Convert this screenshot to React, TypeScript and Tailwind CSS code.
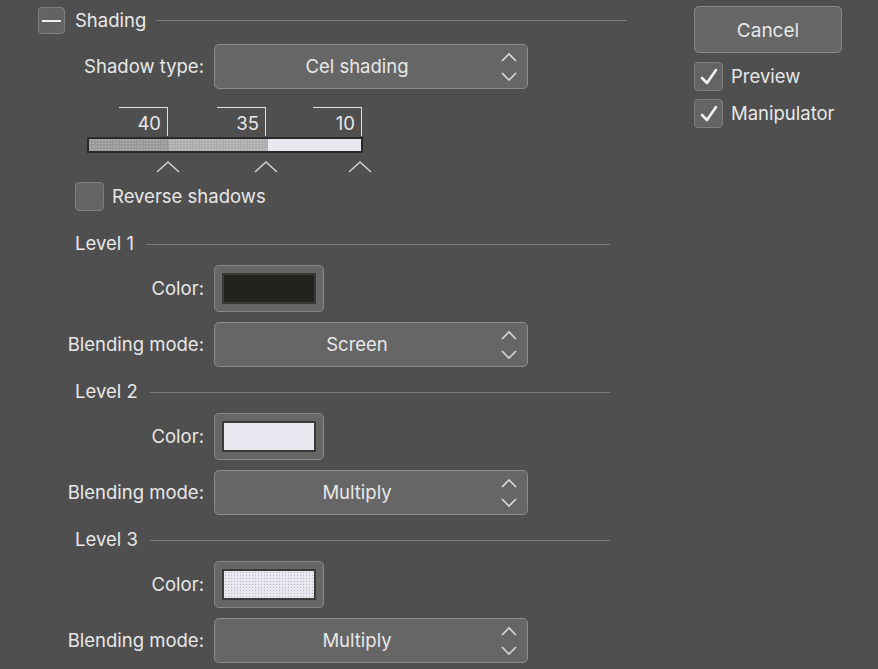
import React from 'react';

const font = { fontFamily: 'Inter, "Noto Sans", "Liberation Sans", sans-serif' };

const Chevrons = () => (
  <svg width="20" height="34" viewBox="0 0 20 34" className="absolute right-[8px] top-1/2 -translate-y-1/2">
    <polyline points="3,11 10,4 17,11" fill="none" stroke="#d8d8d8" strokeWidth="1.6" />
    <polyline points="3,23 10,30 17,23" fill="none" stroke="#d8d8d8" strokeWidth="1.6" />
  </svg>
);

const Select = ({ value }: { value: string }) => (
  <div className="relative w-[314px] h-[45px] rounded-[5px] border border-[#8c8c8c] bg-[#666666] flex items-center justify-center text-[18.5px] text-[#e8e8e8]">
    <span className="-ml-[28px]">{value}</span>
    <Chevrons />
  </div>
);

const Check = ({ checked }: { checked?: boolean }) => (
  <div className="w-[29px] h-[29px] rounded-[4px] border border-[#7e7e7e] bg-[#646464] flex items-center justify-center">
    {checked && (
      <svg width="22" height="22" viewBox="0 0 22 22">
        <polyline points="4,12 9,17 18,4" fill="none" stroke="#f2f2f2" strokeWidth="2.6" strokeLinecap="round" strokeLinejoin="round" />
      </svg>
    )}
  </div>
);

const Row = ({ label, children, className = '' }: { label: string; children: React.ReactNode; className?: string }) => (
  <div className={`flex items-center ${className}`}>
    <div className="w-[176px] pr-[10px] text-right text-[18.5px] text-[#e8e8e8] whitespace-nowrap">{label}</div>
    {children}
  </div>
);

const Swatch = ({ color, dotted }: { color: string; dotted?: boolean }) => (
  <div className="w-[110px] h-[47px] rounded-[5px] border border-[#8a8a8a] bg-[#666666] flex items-center justify-center">
    <div
      className="w-[94px] h-[31px] border-2 border-[#3a3a3a]"
      style={{
        background: color,
        backgroundImage: dotted ? 'radial-gradient(#b8b6bd 0.6px, transparent 0.8px)' : undefined,
        backgroundSize: dotted ? '3px 3px' : undefined,
      }}
    />
  </div>
);

const Divider = ({ label }: { label: string }) => (
  <div className="flex items-center ml-[37px] w-[535px] h-[22px]">
    <span className="text-[18.5px] text-[#e8e8e8]">{label}</span>
    <div className="flex-1 ml-[12px] h-px bg-[#7a7a7a]" />
  </div>
);

const Level = ({ label, color, dotted, mode, first }: { label: string; color: string; dotted?: boolean; mode: string; first?: boolean }) => (
  <div className={first ? 'mt-[22px]' : 'mt-[14px]'}>
    <Divider label={label} />
    <Row label="Color:" className="mt-[10px]">
      <Swatch color={color} dotted={dotted} />
    </Row>
    <Row label="Blending mode:" className="mt-[10px]">
      <Select value={mode} />
    </Row>
  </div>
);

const Caret = ({ x }: { x: number }) => (
  <svg width="26" height="14" viewBox="0 0 26 14" className="absolute top-[53px]" style={{ left: x - 13 }}>
    <polyline points="2,12 13,2 24,12" fill="none" stroke="#d0d0d0" strokeWidth="1.6" />
  </svg>
);

const Marker = ({ x, value }: { x: number; value: string }) => (
  <div className="absolute top-0 h-[29px] w-[49px] border-t border-r border-[#e0e0e0]" style={{ left: x - 49 }}>
    <span className="absolute right-[6px] top-[4px] text-[18.5px] leading-[22px] text-[#e8e8e8]">{value}</span>
  </div>
);

const Slider = () => (
  <div className="relative ml-[49px] mt-[18px] w-[290px] h-[64px]">
    <Marker x={81} value="40" />
    <Marker x={179} value="35" />
    <Marker x={275} value="10" />
    <div className="absolute left-0 top-[30px] w-[276px] h-[16px] border-2 border-[#2a2a2a] flex">
      <div
        className="w-[80px] h-full bg-[#9a9a9a]"
        style={{ backgroundImage: 'radial-gradient(#bdbdbd 0.6px, transparent 0.8px)', backgroundSize: '3px 3px' }}
      />
      <div
        className="w-[99px] h-full bg-[#adadad]"
        style={{ backgroundImage: 'radial-gradient(#cfcfcf 0.6px, transparent 0.8px)', backgroundSize: '3px 3px' }}
      />
      <div className="flex-1 h-full bg-[#e9e7ef]" />
    </div>
    <Caret x={81} />
    <Caret x={179} />
    <Caret x={273} />
  </div>
);

export default function App() {
  return (
    <div className="w-[878px] h-[669px] bg-[#4f4f4f] overflow-hidden flex" style={font}>
      <div className="w-[656px] pl-[38px] pt-[7px]">
        <div className="flex items-center h-[27px] w-[589px]">
          <div className="w-[27px] h-[27px] rounded-[4px] border border-[#7e7e7e] bg-[#636363] flex items-center justify-center">
            <div className="w-[19px] h-[2px] bg-[#eeeeee]" />
          </div>
          <span className="ml-[10px] text-[18.5px] text-[#e8e8e8]">Shading</span>
          <div className="flex-1 ml-[10px] h-px bg-[#7a7a7a]" />
        </div>
        <Row label="Shadow type:" className="mt-[10px]">
          <Select value="Cel shading" />
        </Row>
        <Slider />
        <div className="flex items-center ml-[37px] mt-[11px]">
          <Check />
          <span className="ml-[8px] text-[18.5px] text-[#e8e8e8]">Reverse shadows</span>
        </div>
        <Level label="Level 1" color="#22231f" mode="Screen" first />
        <Level label="Level 2" color="#e9e7ef" mode="Multiply" />
        <Level label="Level 3" color="#e9e7ef" dotted mode="Multiply" />
      </div>
      <div className="pt-[6px] ml-[38px]">
        <div className="w-[148px] h-[47px] rounded-[5px] border border-[#8a8a8a] bg-[#666666] flex items-center justify-center text-[19px] text-[#e8e8e8] pt-[3px]">
          Cancel
        </div>
        <div className="flex items-center mt-[9px]">
          <Check checked />
          <span className="ml-[8px] text-[18.5px] text-[#e8e8e8]">Preview</span>
        </div>
        <div className="flex items-center mt-[8px]">
          <Check checked />
          <span className="ml-[8px] text-[18.5px] text-[#e8e8e8]">Manipulator</span>
        </div>
      </div>
    </div>
  );
}
